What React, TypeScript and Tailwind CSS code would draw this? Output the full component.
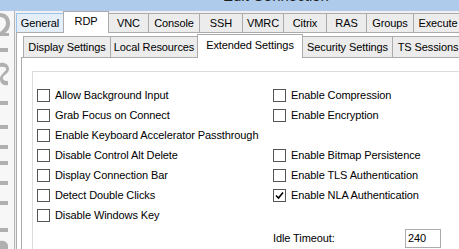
import React from 'react';

type TabDef = { label: string; w: number; selected?: boolean; hover?: boolean };

const topTabs: TabDef[] = [
  { label: 'General', w: 48, hover: true },
  { label: 'RDP', w: 46, selected: true },
  { label: 'VNC', w: 41 },
  { label: 'Console', w: 52 },
  { label: 'SSH', w: 44 },
  { label: 'VMRC', w: 42 },
  { label: 'Citrix', w: 44 },
  { label: 'RAS', w: 41 },
  { label: 'Groups', w: 48 },
  { label: 'Execute', w: 50 },
];

const subTabs: TabDef[] = [
  { label: 'Display Settings', w: 88 },
  { label: 'Local Resources', w: 88 },
  { label: 'Extended Settings', w: 106, selected: true },
  { label: 'Security Settings', w: 91 },
  { label: 'TS Sessions', w: 72 },
];

const leftOptions = [
  'Allow Background Input',
  'Grab Focus on Connect',
  'Enable Keyboard Accelerator Passthrough',
  'Disable Control Alt Delete',
  'Display Connection Bar',
  'Detect Double Clicks',
  'Disable Windows Key',
];

const rightOptions: ({ label: string; checked?: boolean } | null)[] = [
  { label: 'Enable Compression' },
  { label: 'Enable Encryption' },
  null,
  { label: 'Enable Bitmap Persistence' },
  { label: 'Enable TLS Authentication' },
  { label: 'Enable NLA Authentication', checked: true },
  null,
];

const TopTab: React.FC<{ tab: TabDef; tall: number; short: number }> = ({ tab, tall, short }) => {
  if (tab.selected) {
    return (
      <div
        style={{ width: tab.w, height: tall }}
        className="relative z-10 -ml-px mb-[-1px] flex shrink-0 items-center justify-center border border-b-0 border-[#acacac] bg-white pb-[2px]"
      >
        {tab.label}
      </div>
    );
  }
  return (
    <div
      style={{ width: tab.w, height: short }}
      className={
        'flex shrink-0 items-center justify-center whitespace-nowrap border border-b-0 -ml-px first:ml-0 ' +
        (tab.hover ? 'border-[#9ec3e8] bg-[#e3eef9]' : 'border-[#acacac] bg-[#ececec]')
      }
    >
      {tab.label}
    </div>
  );
};

const CheckBox: React.FC<{ checked?: boolean }> = ({ checked }) => (
  <div className="flex h-[13px] w-[13px] shrink-0 items-center justify-center border border-[#555] bg-white">
    {checked && (
      <svg width="9" height="9" viewBox="0 0 9 9">
        <path d="M1 4.5 L3.5 7 L8 1.5" fill="none" stroke="#000" strokeWidth="1.6" />
      </svg>
    )}
  </div>
);

const Option: React.FC<{ label: string; checked?: boolean }> = ({ label, checked }) => (
  <div className="flex h-[20px] items-center gap-[5px] whitespace-nowrap">
    <CheckBox checked={checked} />
    <span>{label}</span>
  </div>
);

const SideDecor: React.FC = () => (
  <svg width="14" height="238" viewBox="0 0 14 238">
    <g fill="#a4a4a4" opacity="0.85">
      <path d="M0 2 C6 2 10 6 10 12 C10 17 8 20 5 22 L9 22 L9 25 L0 25 L0 21 C3 19 6 16 6 12 C6 8 3 6 0 6 Z" />
      <rect x="0" y="37" width="8" height="4" />
      <path d="M0 52 C5 51 9 54 9 58 C9 62 5 63 3 66 C2 68 4 70 8 70 L8 74 C3 75 0 72 0 68 C0 64 4 62 6 59 C7 57 5 55 0 56 Z" />
      <rect x="0" y="90" width="8" height="4" />
      <rect x="0" y="114" width="8" height="4" />
      <rect x="0" y="134" width="8" height="4" />
      <rect x="0" y="150" width="8" height="4" />
      <rect x="0" y="170" width="8" height="4" />
      <rect x="0" y="190" width="8" height="4" />
      <rect x="0" y="217" width="8" height="4" />
      <path d="M0 230 C4 229 7 231 8 234 L8 238 L0 238 Z" />
    </g>
  </svg>
);

export default function App() {
  return (
    <div className="h-[249px] w-[459px] overflow-hidden bg-white font-['Liberation_Sans',Arial,sans-serif] text-[11px] tracking-[-0.1px] text-black">
      <div className="h-[11px] overflow-hidden bg-[#aecbeb] pl-[223px]">
        <div className="mt-[-12px] text-[15px] leading-[15px] tracking-normal text-[#1e1e1e] whitespace-nowrap">Edit Connection</div>
      </div>
      <div className="flex h-[238px]">
        <div className="w-[14px] shrink-0 bg-[#f7f7f7]">
          <SideDecor />
        </div>
        <div className="flex w-[600px] shrink-0 flex-col border-l border-[#b4b4b4] bg-[#f0f0f0] pl-px">
          <div className="flex h-[21px] items-end">
            {topTabs.map((t) => (
              <TopTab key={t.label} tab={t} tall={22} short={19} />
            ))}
          </div>
          <div className="flex flex-1 flex-col border-l border-t border-[#acacac] bg-white pl-[4px] pt-px">
            <div className="flex h-[23px] items-end pl-[2px]">
              {subTabs.map((t) => (
                <TopTab key={t.label} tab={t} tall={24} short={21} />
              ))}
            </div>
            <div className="flex-1 border-l border-t border-[#acacac] bg-white pl-[10px] pt-[13px]">
              <div className="h-full border-l border-t border-[#dcdcdc] pl-[4px] pt-[13px]">
                <div className="grid grid-cols-[236px_auto]">
                  <div className="flex flex-col">
                    {leftOptions.map((o) => (
                      <Option key={o} label={o} />
                    ))}
                  </div>
                  <div className="flex flex-col">
                    {rightOptions.map((o, i) =>
                      o ? <Option key={o.label} label={o.label} checked={o.checked} /> : <div key={i} className="h-[20px]" />
                    )}
                    <div className="mt-[4px] flex items-center">
                      <span className="w-[132px] shrink-0">Idle Timeout:</span>
                      <div className="flex h-[19px] w-[36px] items-center border border-[#acacac] bg-white pl-[2px]">240</div>
                    </div>
                  </div>
                </div>
              </div>
            </div>
          </div>
        </div>
      </div>
    </div>
  );
}
